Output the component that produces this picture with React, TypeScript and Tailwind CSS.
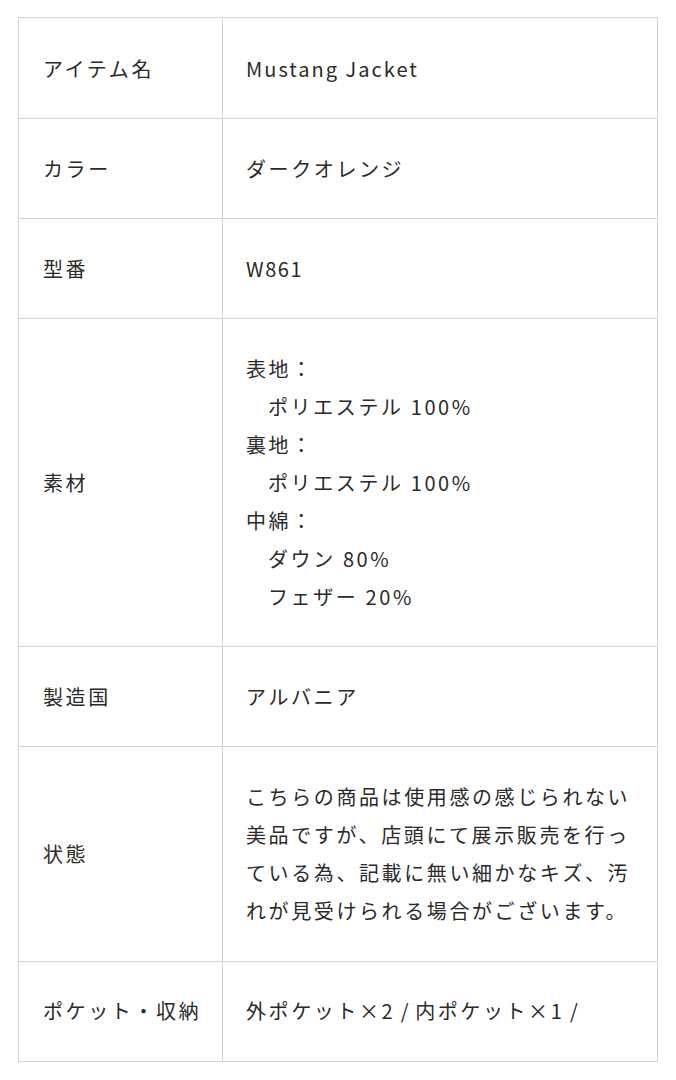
import React from "react";

const rows: { label: string; value: React.ReactNode }[] = [
  { label: "アイテム名", value: <span className="tracking-[0.1em]">Mustang Jacket</span> },
  { label: "カラー", value: "ダークオレンジ" },
  { label: "型番", value: <span className="tracking-[0.08em]">W861</span> },
  {
    label: "素材",
    value: (
      <>
        <div>表地：</div>
        <div className="pl-[22px]">ポリエステル 100%</div>
        <div>裏地：</div>
        <div className="pl-[22px]">ポリエステル 100%</div>
        <div>中綿：</div>
        <div className="pl-[22px]">ダウン 80%</div>
        <div className="pl-[22px]">フェザー 20%</div>
      </>
    ),
  },
  { label: "製造国", value: "アルバニア" },
  {
    label: "状態",
    value:
      "こちらの商品は使用感の感じられない美品ですが、店頭にて展示販売を行っている為、記載に無い細かなキズ、汚れが見受けられる場合がございます。",
  },
  {
    label: "ポケット・収納",
    value: (
      <>
        外ポケット×2<span className="tracking-[0.05em]"> / </span>内ポケット×1<span className="tracking-[0.05em]"> /</span>
      </>
    ),
  },
];

export default function App() {
  return (
    <div
      className="bg-white w-[676px] min-h-[1080px] pt-[17px] pl-[18px]"
      style={{ fontFamily: '"Noto Sans CJK JP", "Noto Sans", sans-serif' }}
    >
      <table className="w-[640px] border-collapse text-[20px] leading-[38px] tracking-[0.13em] text-[#2a2a2a]">
        <tbody>
          {rows.map((r, i) => (
            <tr key={r.label}>
              <td
                className={`w-[204px] border border-[#d4d4d4] pl-[24px] pr-[6px] ${i === 0 ? "pt-[31.5px]" : "pt-[30.55px]"} pb-[30.55px] align-middle`}
              >
                {r.label}
              </td>
              <td
                className={`border border-[#d4d4d4] pl-[23px] pr-[16px] ${i === 0 ? "pt-[31.5px]" : "pt-[30.55px]"} pb-[30.55px] align-middle`}
              >
                {r.value}
              </td>
            </tr>
          ))}
        </tbody>
      </table>
    </div>
  );
}
